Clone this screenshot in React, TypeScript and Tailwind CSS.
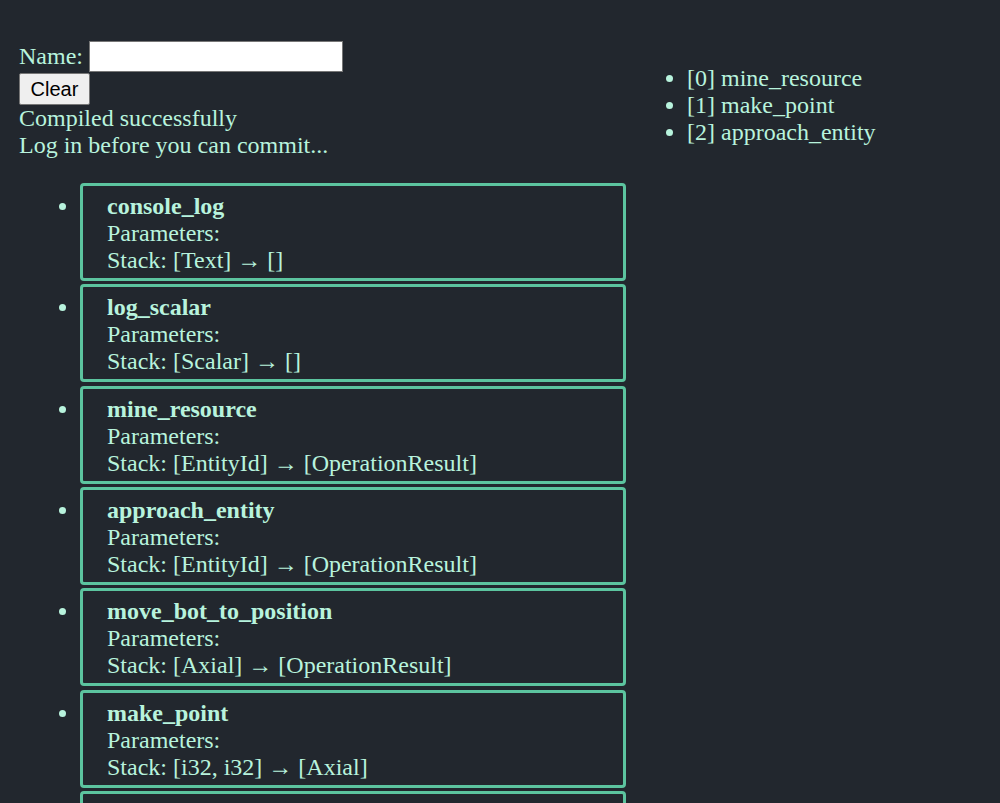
import React from "react";

const cards = [
  { name: "console_log", stack: "[Text] → []" },
  { name: "log_scalar", stack: "[Scalar] → []" },
  { name: "mine_resource", stack: "[EntityId] → [OperationResult]" },
  { name: "approach_entity", stack: "[EntityId] → [OperationResult]" },
  { name: "move_bot_to_position", stack: "[Axial] → [OperationResult]" },
  { name: "make_point", stack: "[i32, i32] → [Axial]" },
  { name: "find_closest_resource", stack: "[] → [EntityId]" },
  { name: "get_position", stack: "[] → [Axial]" },
];

const program = ["[0] mine_resource", "[1] make_point", "[2] approach_entity"];

export default function App() {
  return (
    <div
      className="min-h-[803px] w-full bg-[#22272e] text-[#b8f3dd] text-[24px] leading-[27px] overflow-hidden"
      style={{ fontFamily: '"Liberation Serif", "Times New Roman", serif' }}
    >
      <div className="flex pt-[41px] pl-[19px]">
        <div className="w-[607px] shrink-0">
          <div className="flex items-center h-[31px]">
            <span>Name:</span>
            <input
              type="text"
              className="ml-[6px] w-[254px] h-[31px] bg-white border border-[#767676] text-black"
            />
          </div>
          <button
            className="mt-[1px] w-[71px] h-[32px] bg-[#efefef] border border-[#767676] rounded-[2px] text-black text-[20px] leading-[23px]"
            style={{ fontFamily: '"Liberation Sans", Arial, sans-serif' }}
          >
            Clear
          </button>
          <div>Compiled successfully</div>
          <div>Log in before you can commit...</div>
          <ul className="list-disc pl-[61px] mt-[24px]">
            {cards.map((c) => (
              <li key={c.name} className="mb-[3.35px]">
                <div className="w-[546px] h-[98px] border-[3px] border-[#5cc49f] rounded-[4px] pl-[24px] pt-[7px]">
                  <div className="font-bold">{c.name}</div>
                  <div>Parameters:</div>
                  <div>Stack: {c.stack}</div>
                </div>
              </li>
            ))}
          </ul>
        </div>
        <div className="flex-1">
          <ul className="list-disc pl-[61px] mt-[24px]">
            {program.map((p) => (
              <li key={p}>{p}</li>
            ))}
          </ul>
        </div>
      </div>
    </div>
  );
}
